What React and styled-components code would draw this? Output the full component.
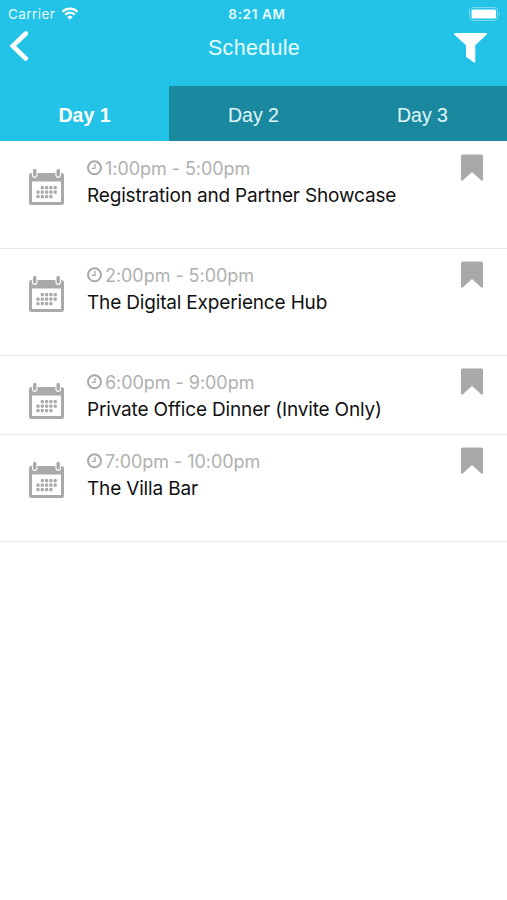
import styled, { createGlobalStyle } from 'styled-components';

const GlobalStyle = createGlobalStyle`
  * {
    box-sizing: border-box;
  }

  body {
    margin: 0;
    background: #fff;
    font-family: Inter, 'Liberation Sans', sans-serif;
  }

  svg {
    display: block;
    flex: none;
  }
`;

const Screen = styled.div`
  width: 100%;
  min-height: 900px;
  background: #fff;
`;

const Header = styled.header`
  background: #22c3e7;
  color: #fff;
`;

const StatusBar = styled.div`
  display: grid;
  grid-template-columns: 1fr auto 1fr;
  align-items: center;
  height: 26px;
  padding: 1px 5px 0 8px;
  color: #e6fbff;
`;

const Carrier = styled.div`
  display: flex;
  align-items: center;
  gap: 6px;
  font-size: 13.5px;
  letter-spacing: 0.45px;
`;

const Clock = styled.div`
  padding-left: 4px;
  font-size: 13.5px;
  font-weight: 600;
  letter-spacing: 0.65px;
`;

const Battery = styled.div`
  justify-self: end;
`;

const NavBar = styled.div`
  display: grid;
  grid-template-columns: 1fr auto 1fr;
  height: 60px;
  padding: 5px 20px 0 9px;
`;

const Title = styled.h1`
  margin: 0;
  padding: 4px 0 0 12px;
  font-family: 'Liberation Sans', sans-serif;
  font-size: 21.5px;
  font-weight: 400;
  line-height: 26px;
  letter-spacing: 0.3px;
  color: #e6fbff;
`;

const NavButton = styled.button`
  align-self: start;
  justify-self: ${({ $end }) => ($end ? 'end' : 'start')};
  padding: ${({ $end }) => ($end ? '2px 0 0' : '0')};
  border: 0;
  background: none;
  cursor: pointer;
`;

const Tabs = styled.nav`
  display: grid;
  grid-template-columns: repeat(3, 1fr);
  height: 55px;
`;

const Tab = styled.button`
  padding: 3px 0 0;
  border: 0;
  background: ${({ $active }) => ($active ? '#22c3e7' : '#1a899f')};
  color: ${({ $active }) => ($active ? '#fff' : '#e0f7fb')};
  font-family: 'Liberation Sans', sans-serif;
  font-size: 19.5px;
  font-weight: ${({ $active }) => ($active ? 700 : 400)};
  cursor: pointer;
`;

const List = styled.ul`
  margin: 0;
  padding: 1px 0 0;
  list-style: none;
`;

const Row = styled.li`
  display: flex;
  align-items: flex-start;
  height: ${({ $compact }) => ($compact ? 79 : 107)}px;
  padding: 12px 24px 0 28px;
  border-bottom: 1px solid #e9e9e9;
`;

const IconSlot = styled.div`
  width: 59px;
  padding-top: 14px;
`;

const Details = styled.div`
  flex: 1;
  padding-top: 1px;
`;

const Time = styled.div`
  display: flex;
  align-items: center;
  gap: 2px;
  height: 26px;
  font-size: 18px;
  color: #b0b0b0;
  letter-spacing: -0.05px;
`;

const Name = styled.div`
  padding-top: 1px;
  line-height: 27px;
  font-size: 19px;
  color: #111;
  letter-spacing: -0.17px;
`;

const sessions = [
  { time: '1:00pm - 5:00pm', name: 'Registration and Partner Showcase' },
  { time: '2:00pm - 5:00pm', name: 'The Digital Experience Hub' },
  { time: '6:00pm - 9:00pm', name: 'Private Office Dinner (Invite Only)', compact: true },
  { time: '7:00pm - 10:00pm', name: 'The Villa Bar' },
];

const WifiIcon = () => (
  <svg width="18" height="13" viewBox="0 0 17 13" fill="none" stroke="#fff" strokeWidth="2.2">
    <path d="M1 4.7a10.7 10.7 0 0 1 15 0" />
    <path d="M3.7 7.7a6.8 6.8 0 0 1 9.6 0" />
    <path d="M8.5 12.8 5.8 10a3.9 3.9 0 0 1 5.4 0z" fill="#fff" stroke="none" />
  </svg>
);

const BatteryIcon = () => (
  <svg width="33" height="14" viewBox="0 0 33 14">
    <rect x="0.5" y="0.5" width="28" height="13" rx="3.5" fill="none" stroke="#7bdbf0" />
    <rect x="2.5" y="2.5" width="24.5" height="9" rx="1.5" fill="#fff" />
    <path d="M30 5v4c1.4-.5 1.4-3.5 0-4z" fill="#7bdbf0" />
  </svg>
);

const BackIcon = () => (
  <svg width="20" height="30" viewBox="0 0 20 30" fill="none" stroke="#fff" strokeWidth="4.5">
    <path d="M16.8 2.5 3.7 15l13.1 12.500" strokeLinecap="round" />
  </svg>
);

const FilterIcon = () => (
  <svg width="33" height="30" viewBox="0 0 33 30" fill="#fff">
    <path d="M.5 0h32q.8.8 0 1.700L21.300 12.300V29.300q-.8.6-1.800-.1L12 23.700V12.300L.5 1.700q-.8-.9 0-1.700z" />
  </svg>
);

const days = [
  [14.3, 19.7], [18.6, 19.7], [22.9, 19.7], [27.2, 19.7],
  [10, 24.2], [14.3, 24.2], [18.6, 24.2], [22.9, 24.2], [27.2, 24.2],
  [10, 28.7], [14.3, 28.7], [18.6, 28.7], [22.9, 28.7],
];

const CalendarIcon = () => (
  <svg width="37" height="38" viewBox="0 0 37 38" fill="#a9a9a9">
    <path
      fillRule="evenodd"
      d="M3.5 5h30q2.5 0 2.500 2.5v27q0 2.5-2.5 2.5h-30Q1 37 1 34.5v-27Q1 5 3.5 5zM4 13.500V34h29V13.5z"
    />
    <rect x="5" y="0.8" width="3.4" height="8" rx="1.7" stroke="#fff" strokeWidth="2.2" paintOrder="stroke" />
    <rect x="28.5" y="0.8" width="3.4" height="8" rx="1.7" stroke="#fff" strokeWidth="2.2" paintOrder="stroke" />
    {days.map(([x, y]) => (
      <rect key={`${x}-${y}`} x={x - 1.6} y={y - 1.6} width="3.2" height="3.2" rx="0.8" />
    ))}
  </svg>
);

const ClockIcon = () => (
  <svg width="16" height="16" viewBox="0 0 16 16" fill="none" stroke="#a9a9a9">
    <circle cx="7.5" cy="7.8" r="6.5" strokeWidth="2" />
    <path d="M8 4.1v4.3H4.8" strokeWidth="1.3" />
  </svg>
);

const BookmarkIcon = () => (
  <svg width="22" height="27" viewBox="0 0 22 27" fill="#a9a9a9">
    <path d="M1.5.5h19q1.5 0 1.5 1.500v24q-.8 1.300-2 .3L11 18l-9 8.3q-1.2 1-2-.3V2Q0 .5 1.5.5z" />
  </svg>
);

const App = () => {
  return (
    <Screen>
      <GlobalStyle />
      <Header>
        <StatusBar>
          <Carrier>
            <span>Carrier</span>
            <WifiIcon />
          </Carrier>
          <Clock>8:21 AM</Clock>
          <Battery>
            <BatteryIcon />
          </Battery>
        </StatusBar>
        <NavBar>
          <NavButton aria-label="Back">
            <BackIcon />
          </NavButton>
          <Title>Schedule</Title>
          <NavButton $end aria-label="Filter">
            <FilterIcon />
          </NavButton>
        </NavBar>
        <Tabs>
          <Tab $active>Day 1</Tab>
          <Tab>Day 2</Tab>
          <Tab>Day 3</Tab>
        </Tabs>
      </Header>
      <List>
        {sessions.map((session) => (
          <Row key={session.name} $compact={session.compact}>
            <IconSlot>
              <CalendarIcon />
            </IconSlot>
            <Details>
              <Time>
                <ClockIcon />
                <span>{session.time}</span>
              </Time>
              <Name>{session.name}</Name>
            </Details>
            <BookmarkIcon />
          </Row>
        ))}
      </List>
    </Screen>
  );
};

export default App;
